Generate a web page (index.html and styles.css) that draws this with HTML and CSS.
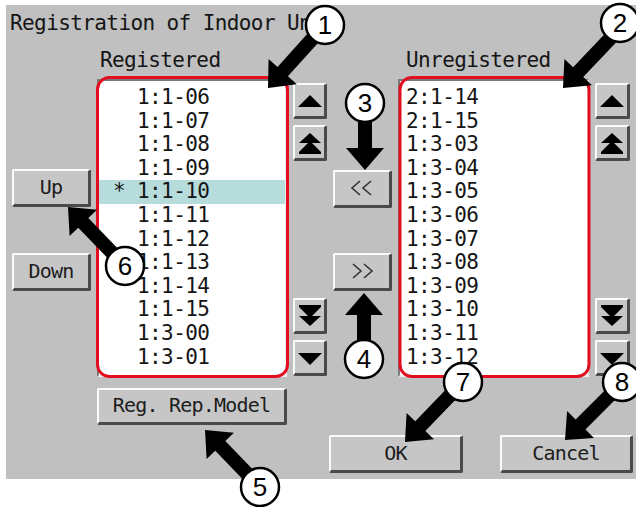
FILE: index.html
```html
<!DOCTYPE html>
<html lang="en">
<head>
  <meta charset="UTF-8" />
  <title>Registration of Indoor Unit</title>
  <link rel="stylesheet" href="styles.css">
</head>
<body>
  <div class="window">
    <h1 class="title">Registration of Indoor Unit</h1>

    <div class="main">
      <div class="label label-left">Registered</div>
      <div class="label label-right">Unregistered</div>

      <div class="side">
        <button class="btn btn-side">Up</button>
        <button class="btn btn-side">Down</button>
      </div>

      <ul class="list list-reg">
        <li><span class="mark"></span>1:1-06</li>
        <li><span class="mark"></span>1:1-07</li>
        <li><span class="mark"></span>1:1-08</li>
        <li><span class="mark"></span>1:1-09</li>
        <li class="selected"><span class="mark">*</span>1:1-10</li>
        <li><span class="mark"></span>1:1-11</li>
        <li><span class="mark"></span>1:1-12</li>
        <li><span class="mark"></span>1:1-13</li>
        <li><span class="mark"></span>1:1-14</li>
        <li><span class="mark"></span>1:1-15</li>
        <li><span class="mark"></span>1:3-00</li>
        <li><span class="mark"></span>1:3-01</li>
      </ul>

      <div class="scroll scroll-left">
        <div class="pair">
          <button class="btn btn-icon"><svg viewBox="0 0 26 26" width="26" height="26"><polygon points="1,19 13,7 25,19"/></svg></button>
          <button class="btn btn-icon"><svg viewBox="0 0 26 26" width="26" height="26"><polygon points="2,13 13,3 24,13"/><polygon points="2,22 13,11 24,22"/><rect x="2" y="22" width="22" height="2"/></svg></button>
        </div>
        <div class="pair">
          <button class="btn btn-icon"><svg viewBox="0 0 26 26" width="26" height="26"><rect x="2" y="2" width="22" height="2"/><polygon points="2,4 13,15 24,4"/><polygon points="2,13 13,23 24,13"/></svg></button>
          <button class="btn btn-icon"><svg viewBox="0 0 26 26" width="26" height="26"><polygon points="1,8 13,20 25,8"/></svg></button>
        </div>
      </div>

      <div class="move">
        <button class="btn btn-move"><svg viewBox="0 0 24 16" width="24" height="16"><polyline points="10,1 2,8 10,15"/><polyline points="21,1 13,8 21,15"/></svg></button>
        <button class="btn btn-move"><svg viewBox="0 0 24 16" width="24" height="16"><polyline points="3,1 11,8 3,15"/><polyline points="14,1 22,8 14,15"/></svg></button>
      </div>

      <ul class="list list-unreg">
        <li>2:1-14</li>
        <li>2:1-15</li>
        <li>1:3-03</li>
        <li>1:3-04</li>
        <li>1:3-05</li>
        <li>1:3-06</li>
        <li>1:3-07</li>
        <li>1:3-08</li>
        <li>1:3-09</li>
        <li>1:3-10</li>
        <li>1:3-11</li>
        <li>1:3-12</li>
      </ul>

      <div class="scroll scroll-right">
        <div class="pair">
          <button class="btn btn-icon"><svg viewBox="0 0 26 26" width="26" height="26"><polygon points="1,19 13,7 25,19"/></svg></button>
          <button class="btn btn-icon"><svg viewBox="0 0 26 26" width="26" height="26"><polygon points="2,13 13,3 24,13"/><polygon points="2,22 13,11 24,22"/><rect x="2" y="22" width="22" height="2"/></svg></button>
        </div>
        <div class="pair">
          <button class="btn btn-icon"><svg viewBox="0 0 26 26" width="26" height="26"><rect x="2" y="2" width="22" height="2"/><polygon points="2,4 13,15 24,4"/><polygon points="2,13 13,23 24,13"/></svg></button>
          <button class="btn btn-icon"><svg viewBox="0 0 26 26" width="26" height="26"><polygon points="1,8 13,20 25,8"/></svg></button>
        </div>
      </div>

      <button class="btn btn-rep">Reg. Rep.Model</button>
    </div>

    <div class="footer">
      <button class="btn btn-ok">OK</button>
      <button class="btn btn-cancel">Cancel</button>
    </div>
  </div>

  <!-- callouts drawn over the screen -->
  <svg class="notes" viewBox="0 0 636 507" width="636" height="507">
    <defs>
      <polygon id="arw" points="0,0 -22,-19 -22,-7 -72,-7 -72,7 -22,7 -22,19"/>
    </defs>
    <rect class="frame" x="97.5" y="77.5" width="190" height="299" rx="12"/>
    <rect class="frame" x="400" y="77.5" width="189" height="299" rx="12"/>

    <use href="#arw" transform="translate(268,88) rotate(132)"/>
    <use href="#arw" transform="translate(563,88) rotate(133.6)"/>
    <use href="#arw" transform="translate(365,170) rotate(90)"/>
    <use href="#arw" transform="translate(364,293) rotate(-90)"/>
    <use href="#arw" transform="translate(205,430) rotate(-134)"/>
    <use href="#arw" transform="translate(68,207) rotate(-134)"/>
    <use href="#arw" transform="translate(405,442) rotate(134)"/>
    <use href="#arw" transform="translate(565,440) rotate(135)"/>

    <g class="callout"><circle cx="325" cy="25" r="19"/><text x="325" y="34">1</text></g>
    <g class="callout"><circle cx="620" cy="23" r="19"/><text x="620" y="32">2</text></g>
    <g class="callout"><circle cx="365" cy="103" r="19"/><text x="365" y="112">3</text></g>
    <g class="callout"><circle cx="364" cy="359" r="19"/><text x="364" y="368">4</text></g>
    <g class="callout"><circle cx="260" cy="487" r="19"/><text x="260" y="496">5</text></g>
    <g class="callout"><circle cx="125" cy="266" r="19"/><text x="125" y="275">6</text></g>
    <g class="callout"><circle cx="463" cy="382" r="19"/><text x="463" y="391">7</text></g>
    <g class="callout"><circle cx="622" cy="382" r="19"/><text x="622" y="391">8</text></g>
  </svg>
</body>
</html>
```

FILE: styles.css
```css
html,
body {
  height: 507px;
  overflow: hidden;
}

body {
  box-sizing: border-box;
  margin: 0;
  padding: 5px 0 0 6px;
  position: relative;
  background: #fff;
  color: #151515;
  font-family: "DejaVu Sans Mono", "Liberation Mono", monospace;
}

.window {
  box-sizing: border-box;
  width: 630px;
  height: 474px;
  padding: 6px 0;
  background: #c0c0c0;
}

.title,
.label,
.list {
  font-size: 21px;
  line-height: 24px;
  letter-spacing: -0.6px;
  font-weight: normal;
  white-space: nowrap;
}

.title {
  margin: 0 0 0 4px;
}

.main {
  display: grid;
  grid-template-columns: 79px 190px 34px 59px 191px 35px;
  grid-template-rows: 31px 298px auto;
  column-gap: 6px;
  margin-top: 13px;
  padding-left: 6px;
}

.label-left {
  grid-column: 2;
  grid-row: 1;
  padding-left: 3px;
}

.label-right {
  grid-column: 5;
  grid-row: 1;
  padding-left: 8px;
}

/* buttons */
.btn {
  box-sizing: border-box;
  margin: 0;
  padding: 0 0 2px;
  background: #c6c6c6;
  border-style: solid;
  border-width: 2px 3px 3px 2px;
  border-color: #fbfbfb #4a4a4a #4a4a4a #fbfbfb;
  border-radius: 2px;
  color: #1c1c1c;
  font-family: "DejaVu Sans Mono", "Liberation Mono", monospace;
  font-size: 20px;
  letter-spacing: -0.8px;
  display: flex;
  align-items: center;
  justify-content: center;
}

.side {
  grid-column: 1;
  grid-row: 2;
  display: flex;
  flex-direction: column;
  gap: 46px;
  padding-top: 90px;
}

.btn-side {
  width: 79px;
  height: 38px;
}

.scroll {
  grid-row: 2;
  display: flex;
  flex-direction: column;
  justify-content: space-between;
  padding: 4px 0 1px;
}

.scroll-left { grid-column: 3; }
.scroll-right { grid-column: 6; }

.pair {
  display: flex;
  flex-direction: column;
  gap: 6px;
}

.btn-icon {
  width: 100%;
  height: 36px;
  padding: 0;
}

.btn-icon svg {
  fill: #000;
}

.move {
  grid-column: 4;
  grid-row: 2;
  display: flex;
  flex-direction: column;
  gap: 45px;
  padding-top: 91px;
}

.btn-move {
  width: 59px;
  height: 38px;
}

.btn-move svg {
  fill: none;
  stroke: #333;
  stroke-width: 1.6;
}

/* lists */
.list {
  box-sizing: border-box;
  margin: 0;
  padding: 5px 0 0;
  list-style: none;
  background: #fff;
  border: 2px solid;
  border-color: #7a7a7a #eeeeee #eeeeee #7a7a7a;
  overflow: hidden;
  grid-row: 2;
}

.list li {
  height: 23.6px;
  line-height: 23.6px;
}

.list-reg {
  grid-column: 2;
  padding-left: 14px;
}

.list-unreg {
  grid-column: 5;
  padding-left: 6px;
}

.mark {
  display: inline-block;
  width: 24px;
}

.selected {
  background: #b6dcdc;
  margin-left: -14px;
  padding-left: 14px;
}

.btn-rep {
  grid-column: 2;
  grid-row: 3;
  margin-top: 11px;
  height: 37px;
}

.footer {
  display: flex;
  margin-top: 10px;
  padding-left: 323px;
  gap: 37px;
}

.btn-ok {
  width: 134px;
  height: 38px;
}

.btn-cancel {
  width: 133px;
  height: 38px;
}

/* annotation layer */
.notes {
  position: absolute;
  top: 0;
  left: 0;
  pointer-events: none;
}

.notes .frame {
  fill: none;
  stroke: #e20e20;
  stroke-width: 3;
}

.notes use {
  fill: #000;
}

.callout circle {
  fill: #fff;
  stroke: #000;
  stroke-width: 2.5;
}

.callout text {
  font-family: "Liberation Sans", Arial, sans-serif;
  font-size: 26px;
  text-anchor: middle;
  fill: #000;
}
```
